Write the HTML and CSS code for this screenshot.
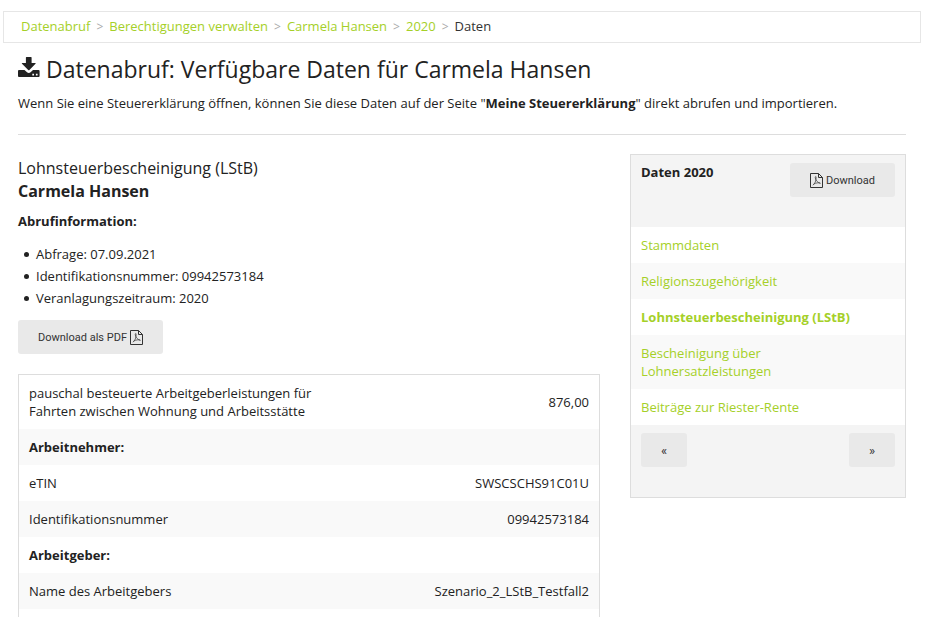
FILE: index.html
```html
<!DOCTYPE html>
<html lang="de">
<head>
    <meta charset="UTF-8">
    <meta name="viewport" content="width=device-width, initial-scale=1.0">
    <title>Datenabruf: Verfügbare Daten</title>
    <link rel="stylesheet" href="styles.css">
</head>
<body>

    <!-- file-pdf icon, shared by both download buttons -->
    <svg class="sprite" width="0" height="0" aria-hidden="true">
        <symbol id="filePdf" viewBox="0 0 13 15">
            <path fill="none" stroke="currentColor" d="M.5 .5H8.5L12.5 4.5V14.5H.5ZM8.5 .5V4.5H12.5"/>
            <path fill="none" stroke="currentColor" stroke-width=".7" d="M2.8 12.2C4.8 10.8 6.3 8 6.1 4C6 3 5 3.600 5.300 5C5.800 7.500 7.200 9.300 10.400 10.300C9 9.300 5.600 9.900 3.600 11.200"/>
        </symbol>
    </svg>

    <div class="page">
        <nav class="breadcrumbs" aria-label="Breadcrumb">
            <ul>
                <li><a href="#">Datenabruf</a></li>
                <li><a href="#">Berechtigungen verwalten</a></li>
                <li><a href="#">Carmela Hansen</a></li>
                <li><a href="#">2020</a></li>
                <li class="current">Daten</li>
            </ul>
        </nav>

        <header class="pageHeader">
            <h1>
                <svg class="titleIcon" viewBox="0 0 22 21" aria-hidden="true">
                    <path fill="currentColor" fill-rule="evenodd" d="M8.500 0h4.500q.6 0 .6 .6V6h3.600q1 0 .3 .8L11.400 13q-.6.6-1.200 0L4 6.800Q3.300 6 4.300 6H7.900V.6Q7.900 0 8.500 0ZM1 13H6.500L9 15.300q1.800 1.500 3.600 0L15 13H20.600Q21.600 13 21.600 14V19q0 1-1 1H1q-1 0-1-1V14q0-1 1-1ZM14.300 16.800v1.700H16v-1.700ZM17.900 16.800v1.700h1.700v-1.700Z"/>
                </svg>
                Datenabruf: Verfügbare Daten für Carmela Hansen
            </h1>
            <p>Wenn Sie eine Steuererklärung öffnen, können Sie diese Daten auf der Seite "<strong>Meine Steuererklärung</strong>" direkt abrufen und importieren.</p>
            <hr>
        </header>

        <div class="columns">
            <main class="content">
                <h2>Lohnsteuerbescheinigung (LStB)<br><strong>Carmela Hansen</strong></h2>
                <h3>Abrufinformation:</h3>
                <ul class="infoList">
                    <li>Abfrage: 07.09.2021</li>
                    <li>Identifikationsnummer: 09942573184</li>
                    <li>Veranlagungszeitraum: 2020</li>
                </ul>
                <button type="button" class="button">Download als PDF <svg class="pdfIcon" aria-hidden="true"><use href="#filePdf"/></svg></button>

                <table class="dataTable">
                    <tbody>
                        <tr>
                            <td>pauschal besteuerte Arbeitgeberleistungen für Fahrten zwischen Wohnung und Arbeitsstätte</td>
                            <td class="value">876,00</td>
                        </tr>
                        <tr>
                            <th colspan="2">Arbeitnehmer:</th>
                        </tr>
                        <tr>
                            <td>eTIN</td>
                            <td class="value">SWSCSCHS91C01U</td>
                        </tr>
                        <tr>
                            <td>Identifikationsnummer</td>
                            <td class="value">09942573184</td>
                        </tr>
                        <tr>
                            <th colspan="2">Arbeitgeber:</th>
                        </tr>
                        <tr>
                            <td>Name des Arbeitgebers</td>
                            <td class="value">Szenario_2_LStB_Testfall2</td>
                        </tr>
                        <tr>
                            <td>&nbsp;</td>
                            <td class="value"></td>
                        </tr>
                    </tbody>
                </table>
            </main>

            <aside class="sidebar">
                <div class="panel">
                    <div class="panelHead">
                        <strong>Daten 2020</strong>
                        <button type="button" class="button"><svg class="pdfIcon" aria-hidden="true"><use href="#filePdf"/></svg>Download</button>
                    </div>
                    <ul class="panelList">
                        <li><a href="#">Stammdaten</a></li>
                        <li><a href="#">Religionszugehörigkeit</a></li>
                        <li class="active"><a href="#">Lohnsteuerbescheinigung (LStB)</a></li>
                        <li><a href="#">Bescheinigung über<br>Lohnersatzleistungen</a></li>
                        <li><a href="#">Beiträge zur Riester-Rente</a></li>
                    </ul>
                    <div class="panelFoot">
                        <button type="button" class="button arrow" aria-label="Zurück">«</button>
                        <button type="button" class="button arrow" aria-label="Weiter">»</button>
                    </div>
                </div>
            </aside>
        </div>
    </div>

</body>
</html>
```

FILE: styles.css
```css
* {
    box-sizing: border-box;
}
body {
    margin: 0;
    font-family: "Open Sans", sans-serif;
    font-size: 13px;
    line-height: 18px;
    color: #222;
    background: #fff;
}
a {
    color: #a5d028;
    text-decoration: none;
}
a:hover {
    text-decoration: underline;
}
.sprite {
    position: absolute;
}
.page {
    height: 100vh;
    padding: 11px 4px 0 3px;
    overflow: hidden;
}
.breadcrumbs {
    border: 1px solid #e6e6e6;
    padding: 5px 17px 6px;
}
.breadcrumbs ul {
    display: flex;
    margin: 0;
    padding: 0;
    list-style: none;
}
.breadcrumbs li + li::before {
    content: ">";
    margin: 0 6px;
    font-size: 12px;
    color: #aaa;
}
.breadcrumbs .current {
    color: #333;
}
.pageHeader {
    padding: 0 15px;
}
.pageHeader h1 {
    margin: 10px 0 9px;
    font-size: 23px;
    font-weight: 400;
    line-height: 32px;
}
.pageHeader p {
    margin: 0;
}
.pageHeader hr {
    margin: 22px 0 19px;
    border: 0;
    border-top: 1px solid #ddd;
}
.titleIcon {
    width: 22px;
    height: 21px;
}
.columns {
    display: grid;
    grid-template-columns: 2fr 1fr;
}
.content,
.sidebar {
    padding: 0 15px;
}
.content h2 {
    margin: 3px 0 8px;
    font-size: 16px;
    font-weight: 400;
    line-height: 23px;
}
.content h3 {
    margin: 0 0 12px;
    font-size: 13px;
    line-height: 20px;
}
.infoList {
    margin: 0 0 11px;
    padding-left: 6px;
    line-height: 22px;
    list-style: none;
}
.infoList li {
    display: flex;
    align-items: center;
    gap: 7px;
}
.infoList li::before {
    content: "";
    width: 5px;
    height: 5px;
    border-radius: 50%;
    background: #222;
}
.button {
    display: flex;
    align-items: center;
    gap: 3px;
    height: 34px;
    padding: 0 20px;
    border: 0;
    border-radius: 3px;
    background: #e9e9e9;
    color: #333;
    font-family: Roboto, sans-serif;
    font-size: 11px;
    cursor: pointer;
}
.button:hover {
    background: #ddd;
}
.arrow {
    font-size: 13px;
}
.pdfIcon {
    width: 13px;
    height: 15px;
}
.dataTable {
    width: 100%;
    margin-top: 20px;
    border: 1px solid #ddd;
    border-spacing: 0;
}
.dataTable td,
.dataTable th {
    padding: 9px 10px;
    text-align: left;
}
.dataTable tr:nth-child(even) {
    background: #f9f9f9;
}
.dataTable td:first-child {
    width: 55%;
}
.dataTable .value {
    text-align: right;
}
.panel {
    border: 1px solid #ddd;
    background: #f4f4f4;
}
.panelHead,
.panelFoot {
    display: flex;
    justify-content: space-between;
    align-items: flex-start;
    height: 72px;
    padding: 8px 10px;
}
.panelList {
    margin: 0;
    padding: 0;
    list-style: none;
}
.panelList li {
    padding: 9px 10px;
    background: #fff;
}
.panelList li:nth-child(even) {
    background: #f9f9f9;
}
.panelList .active {
    font-weight: 700;
}
```
